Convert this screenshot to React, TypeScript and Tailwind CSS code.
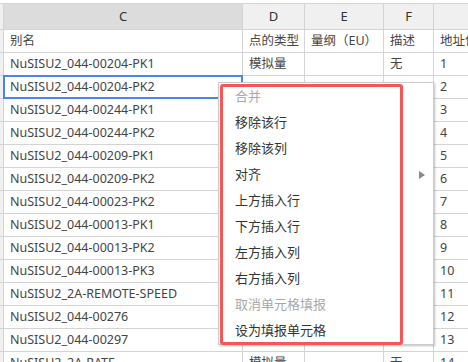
import React from "react";

const names = [
    "NuSISU2_044-00204-PK1",
    "NuSISU2_044-00204-PK2",
    "NuSISU2_044-00244-PK1",
    "NuSISU2_044-00244-PK2",
    "NuSISU2_044-00209-PK1",
    "NuSISU2_044-00209-PK2",
    "NuSISU2_044-00023-PK2",
    "NuSISU2_044-00013-PK1",
    "NuSISU2_044-00013-PK2",
    "NuSISU2_044-00013-PK3",
    "NuSISU2_2A-REMOTE-SPEED",
    "NuSISU2_044-00276",
    "NuSISU2_044-00297",
    "NuSISU2_2A-RATE",
];

const menu: { label: string; disabled?: boolean; sub?: boolean }[] = [
    { label: "合并", disabled: true },
    { label: "移除该行" },
    { label: "移除该列" },
    { label: "对齐", sub: true },
    { label: "上方插入行" },
    { label: "下方插入行" },
    { label: "左方插入列" },
    { label: "右方插入列" },
    { label: "取消单元格填报", disabled: true },
    { label: "设为填报单元格" },
];

function Row(props: {
    c: string;
    d?: string;
    e?: string;
    f?: string;
    g?: string;
    selected?: boolean;
}) {
    const cell = "h-[23px] border-r border-b border-[#d4d4d4] flex items-center px-[6px] shrink-0 whitespace-nowrap overflow-hidden";
    return (
        <div className="flex">
            <div className="w-[4px] h-[23px] border-r border-b border-[#d4d4d4] bg-[#f0f0f0] shrink-0" />
            <div className={`${cell} w-[239px] relative overflow-visible`}>
                {props.c}
                {props.selected && (
                    <div className="absolute left-[-1px] top-[-1px] w-[240px] h-[24px] border-2 border-[#4a86e8]" />
                )}
            </div>
            <div className={`${cell} w-[62px]`}>{props.d}</div>
            <div className={`${cell} w-[79px]`}>{props.e}</div>
            <div className={`${cell} w-[50px]`}>{props.f}</div>
            <div className={`${cell} w-[60px]`}>{props.g}</div>
        </div>
    );
}

function ContextMenu() {
    return (
        <div className="absolute left-[218px] top-[82px] w-[216px] h-[263px] pt-[1px] bg-white border border-[#cccccc] shadow-[1px_1px_2px_rgba(0,0,0,0.25)] text-[13px]">
            {menu.map((m) => (
                <div
                    key={m.label}
                    className={`h-[26px] flex items-center pl-[16px] pr-[8px] ${m.disabled ? "text-[#a8a8a8]" : "text-[#333333]"}`}
                >
                    <span className="flex-1">{m.label}</span>
                    {m.sub && (
                        <span className="w-0 h-0 border-y-[4px] border-y-transparent border-l-[6px] border-l-[#888888]" />
                    )}
                </div>
            ))}
            {/* red highlight drawn over the menu */}
            <div className="absolute left-[1px] top-[1px] w-[183px] h-[261px] border-[3px] border-[#f65656] rounded-[3px] pointer-events-none" />
        </div>
    );
}

export default function App() {
    return (
        <div
            className="relative w-[468px] h-[362px] overflow-hidden bg-white text-[12.5px] text-[#444444]"
            style={{ fontFamily: '"Noto Sans", "Noto Sans CJK SC", sans-serif' }}
        >
            <div className="flex mt-[3px] border-t border-[#d4d4d4] text-[#333333] text-[13px]">
                <div className="w-[4px] h-[26px] border-r border-b border-[#d4d4d4] bg-[#f0f0f0] shrink-0" />
                <div className="w-[239px] h-[26px] border-r border-b border-[#d4d4d4] bg-[#dcdcdc] flex items-center justify-center shrink-0">C</div>
                <div className="w-[62px] h-[26px] border-r border-b border-[#d4d4d4] bg-[#f0f0f0] flex items-center justify-center shrink-0">D</div>
                <div className="w-[79px] h-[26px] border-r border-b border-[#d4d4d4] bg-[#f0f0f0] flex items-center justify-center shrink-0">E</div>
                <div className="w-[50px] h-[26px] border-r border-b border-[#d4d4d4] bg-[#f0f0f0] flex items-center justify-center shrink-0">F</div>
                <div className="w-[60px] h-[26px] border-r border-b border-[#d4d4d4] bg-[#f0f0f0] shrink-0" />
            </div>
            <Row c="别名" d="点的类型" e="量纲（EU）" f="描述" g="地址位" />
            {names.map((n, i) => {
                // rows 2..12 sit fully behind the menu in D..F
                const hidden = i >= 1 && i <= 11;
                return (
                    <Row
                        key={n}
                        c={n}
                        d={hidden ? undefined : "模拟量"}
                        f={hidden ? undefined : "无"}
                        g={String(i + 1)}
                        selected={i === 1}
                    />
                );
            })}
            <ContextMenu />
        </div>
    );
}
